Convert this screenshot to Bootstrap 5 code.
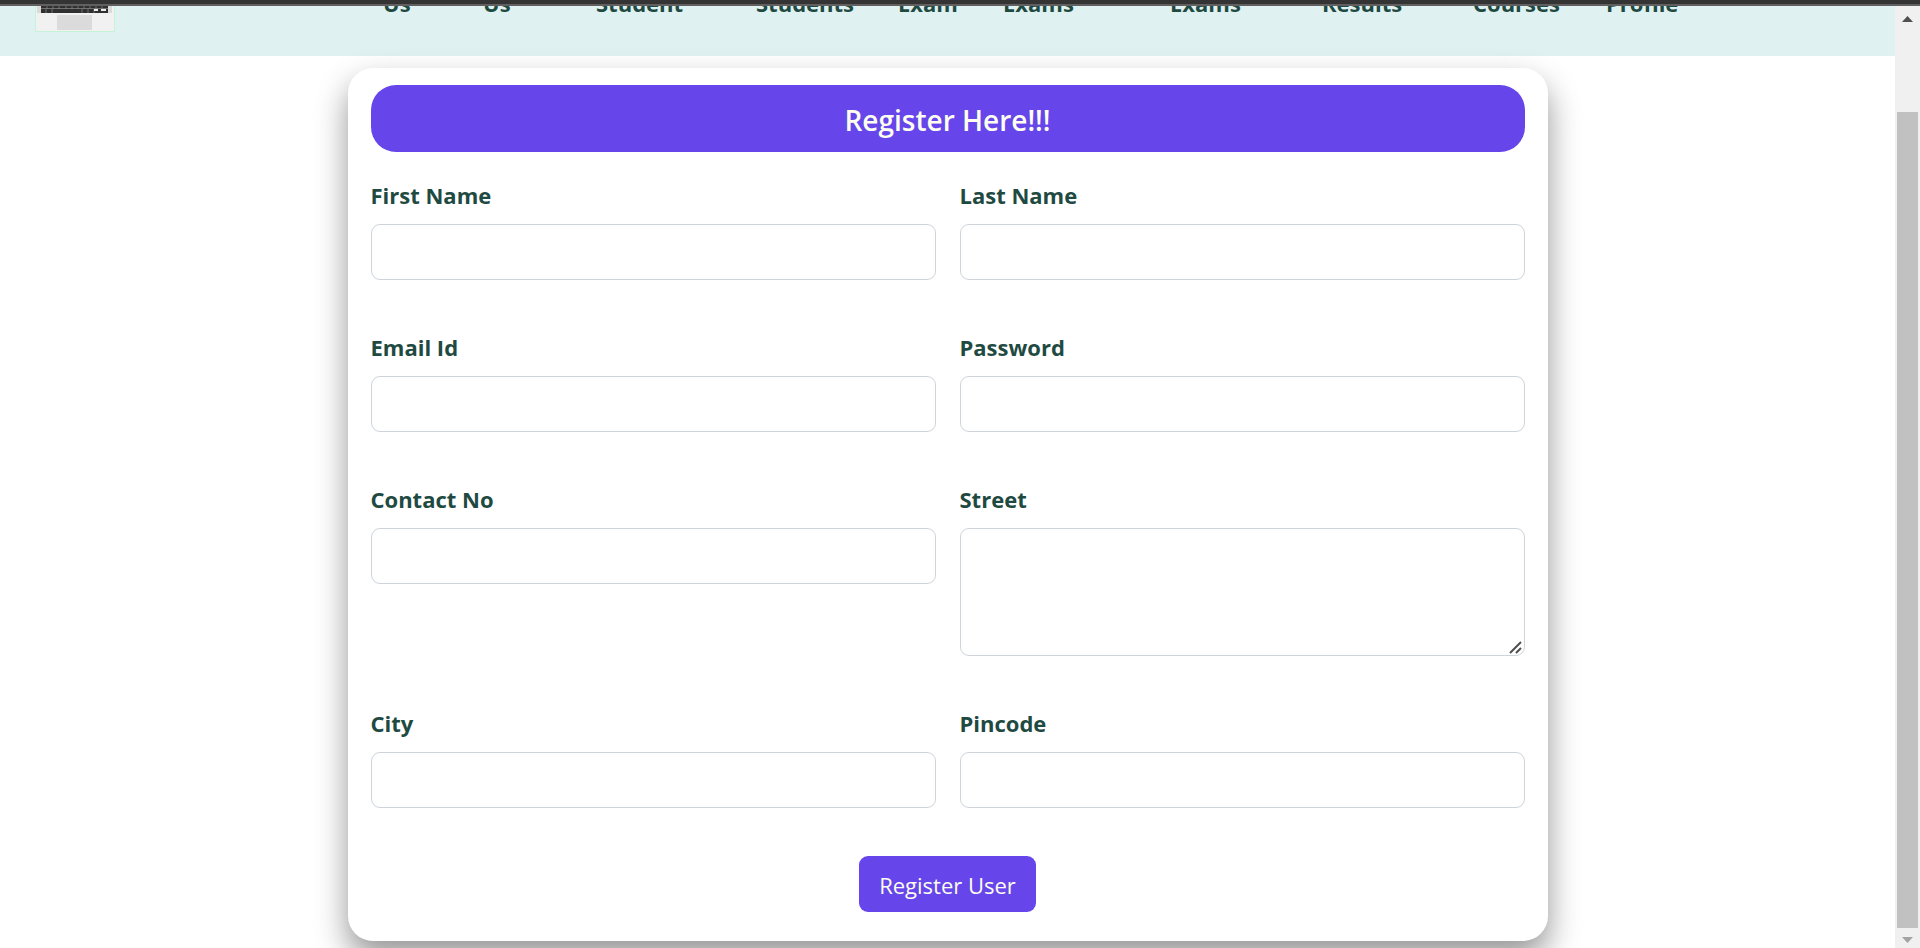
<!DOCTYPE html>
<html lang="en">
<head>
<meta charset="utf-8">
<meta name="viewport" content="width=device-width, initial-scale=1">
<title>Register</title>
<link href="https://cdn.jsdelivr.net/npm/bootstrap@5.3.0/dist/css/bootstrap.min.css" rel="stylesheet">
<style>
body { font-family: "Open Sans", "Noto Sans", sans-serif; font-size: 22px; background: #fff; }
.top-edge { height: 6px; background: #343434; border-bottom: 2px solid #625f61; }
.site-nav { height: 50px; background: #dff1f1; overflow: hidden; display: grid;
  grid-template-columns: 35fr 348fr 100fr 113fr 160fr 142fr 105fr 167fr 152fr 151fr 133fr 289fr; }
.site-nav ul { display: contents; list-style: none; }
.site-nav li { min-width: 0; }
.site-nav .nav-item a { display: block; margin-top: -21px; line-height: 36px; }
.site-nav .nav-item a, .field-label { color: #1f4a42; font-size: 22px; font-weight: 700; text-decoration: none; white-space: nowrap; }
.brand-logo { grid-column: 2; line-height: 0; }
.register-card { max-width: 1200px; margin: 12px auto 0; padding: 17px 23px 29px; border: 0; border-radius: 25px;
  box-shadow: 0 16px 32px rgba(0, 0, 0, .42); background: #fff; }
.banner { background: #6646ea; color: #fdfdf0; border-radius: 25px; font-size: 28px; font-weight: 600; line-height: 34px; padding: 18px 0 15px; margin-bottom: 28px; }
.field-label { display: block; line-height: 30px; margin-bottom: 14px; }
.register-card .form-control { height: 56px; border: 1px solid #ced4da; border-radius: 9px; font-size: 22px; background: #fff; }
.register-card textarea.form-control { height: 128px; resize: vertical; }
textarea::-webkit-resizer { background: url("data:image/svg+xml,%3Csvg xmlns='http://www.w3.org/2000/svg' width='15' height='15'%3E%3Cpath d='M1 13 12 2M7 13l5-5' stroke='%23505050' stroke-width='2'/%3E%3C/svg%3E") no-repeat; }
.form-rows { --bs-gutter-x: 24px; row-gap: 52px; }
.btn-register { margin-top: 48px; height: 56px; padding: 2px 20px 0; background: #6646ea; color: #fdfdf0; border: 0; border-radius: 9px; font-size: 22px; }
.btn-register:hover { background: #5636da; color: #fff; }
.scroll-rail { width: 25px; background: #f0f0f0; padding: 0 2px; }
.scroll-thumb { background: #c1c1c1; }
.arrow-up { height: 106px; padding-top: 10px; line-height: 0; }
.arrow-down { height: 20px; padding-top: 9px; line-height: 0; }
</style>
</head>
<body>
<div class="d-flex flex-column vh-100 overflow-hidden">
  <div class="top-edge flex-shrink-0"></div>
  <div class="d-flex flex-grow-1 overflow-hidden">
    <div class="flex-grow-1 overflow-hidden">
      <nav class="site-nav">
        <a class="brand-logo" href="#" aria-label="Home">
          <svg width="80" height="27" viewBox="0 0 80 27">
            <path d="M0 0h79v25H0z" fill="#f1f1f1"/>
            <path d="M.5 0v25.500h79V0" fill="none" stroke="#c5f3d8"/>
            <path d="M2 0h75v7H2z" fill="#dadada"/>
            <path d="M6 0h67v7H6z" fill="#303030"/>
            <path d="M6 2.500h67M12 0v3M18 0v3M24 0v3M31 0v3M37 0v3M43 0v3M49 0v3M55 0v3M61 0v3M67 0v3M11 3v4M17 3v4M47 3v4M53 3v4M59 3v4" stroke="#8b8b8b" stroke-width=".7"/>
            <path d="M59 4h4M66 4h5" stroke="#ececec" stroke-width="2"/>
            <path d="M22 9h35v15H22z" fill="#dbdbdb"/>
          </svg>
        </a>
        <ul>
          <li class="nav-item"><a href="#">Us</a></li>
          <li class="nav-item"><a href="#">Us</a></li>
          <li class="nav-item"><a href="#">Student</a></li>
          <li class="nav-item"><a href="#">Students</a></li>
          <li class="nav-item"><a href="#">Exam</a></li>
          <li class="nav-item"><a href="#">Exams</a></li>
          <li class="nav-item"><a href="#">Exams</a></li>
          <li class="nav-item"><a href="#">Results</a></li>
          <li class="nav-item"><a href="#">Courses</a></li>
          <li class="nav-item"><a href="#">Profile</a></li>
        </ul>
      </nav>
      <main class="register-card card">
        <h1 class="banner text-center">Register Here!!!</h1>
        <form>
          <div class="row form-rows">
            <div class="col-6"><label class="field-label" for="first">First Name</label><input class="form-control" id="first" type="text"></div>
            <div class="col-6"><label class="field-label" for="last">Last Name</label><input class="form-control" id="last" type="text"></div>
            <div class="col-6"><label class="field-label" for="email">Email Id</label><input class="form-control" id="email" type="email"></div>
            <div class="col-6"><label class="field-label" for="pass">Password</label><input class="form-control" id="pass" type="password"></div>
            <div class="col-6"><label class="field-label" for="contact">Contact No</label><input class="form-control" id="contact" type="tel"></div>
            <div class="col-6"><label class="field-label" for="street">Street</label><textarea class="form-control" id="street"></textarea></div>
            <div class="col-6"><label class="field-label" for="city">City</label><input class="form-control" id="city" type="text"></div>
            <div class="col-6"><label class="field-label" for="pin">Pincode</label><input class="form-control" id="pin" type="text"></div>
          </div>
          <div class="text-center"><button class="btn btn-register" type="submit">Register User</button></div>
        </form>
      </main>
    </div>
    <div class="scroll-rail d-flex flex-column flex-shrink-0" aria-hidden="true">
      <div class="arrow-up text-center"><svg width="11" height="6" viewBox="0 0 11 6"><path d="M0 6 5.500 0 11 6z" fill="#505050"/></svg></div>
      <div class="scroll-thumb flex-grow-1"></div>
      <div class="arrow-down text-center"><svg width="11" height="6" viewBox="0 0 11 6"><path d="M0 0h11L5.500 6z" fill="#a3a3a3"/></svg></div>
    </div>
  </div>
</div>
<script src="https://cdn.jsdelivr.net/npm/bootstrap@5.3.0/dist/js/bootstrap.bundle.min.js"></script>
</body>
</html>
